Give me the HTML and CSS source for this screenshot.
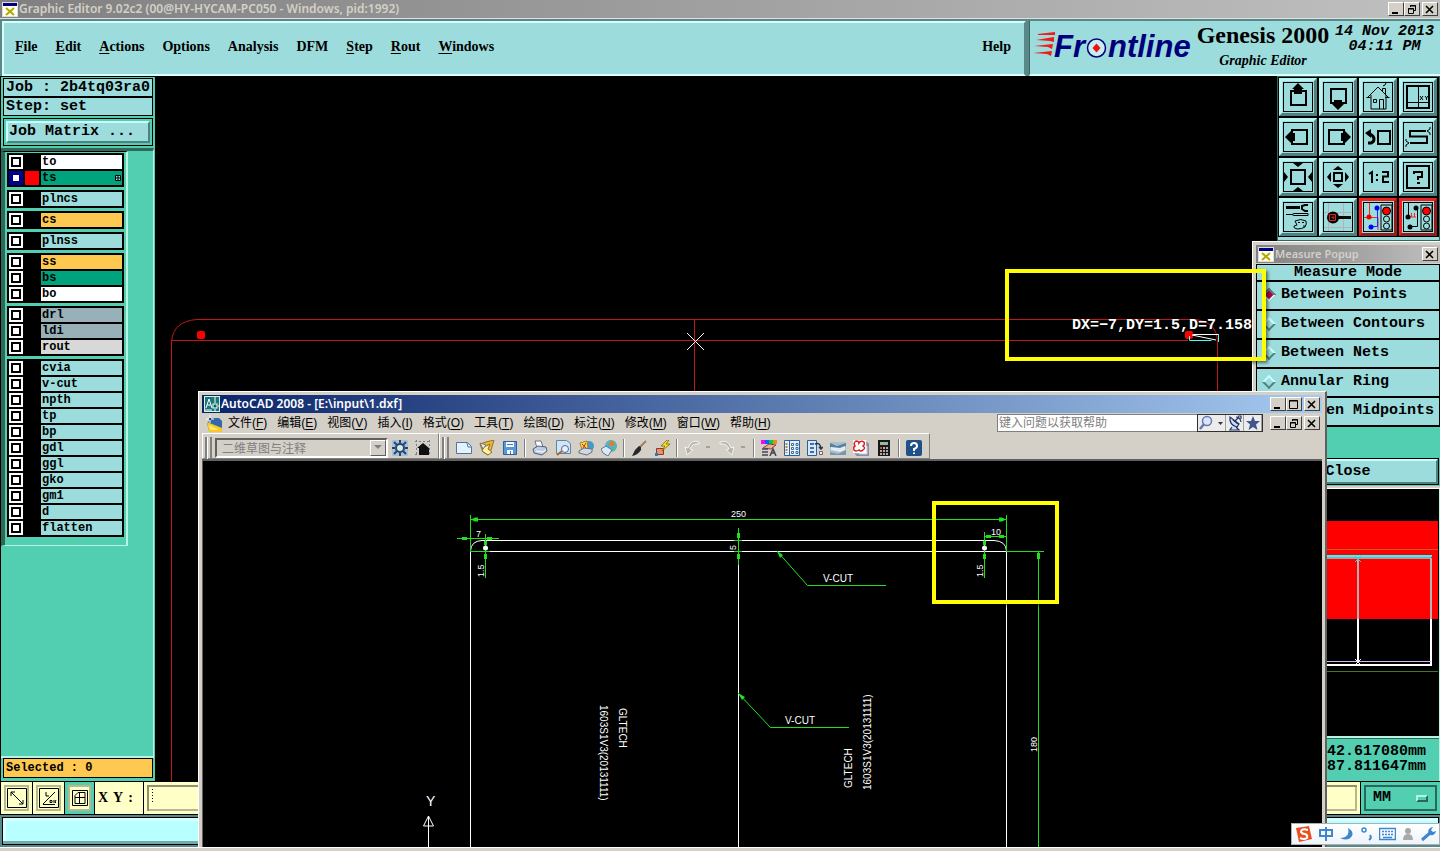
FILE: index.html
```html
<!DOCTYPE html>
<html lang="zh-CN">
<head>
<meta charset="utf-8">
<title>Graphic Editor 9.02c2</title>
<link rel="stylesheet" href="styles.css">
</head>
<body>
<div class="app">
  <header class="titlebar titlebar-idle">
    <svg class="app-icon" width="16" height="15" viewBox="0 0 16 15"><rect x="0" y="0" width="16" height="15" fill="#ddd"/><rect x="1" y="1" width="14" height="3" fill="#000080"/><rect x="1" y="4" width="14" height="10" fill="#fffff4"/><path d="M4 6l8 7M12 6l-8 7" stroke="#b5a800" stroke-width="2"/></svg>
    <h1 class="title">Graphic Editor 9.02c2 (00@HY-HYCAM-PC050 - Windows, pid:1992)</h1>
    <div class="win-buttons">
      <button class="wb" aria-label="Minimize"><svg width="12" height="11" viewBox="0 0 12 11"><path d="M2 9h6" stroke="#000" stroke-width="2"/></svg></button>
      <button class="wb" aria-label="Restore"><svg width="12" height="11" viewBox="0 0 12 11"><path d="M4.500 3V1.500h5v5H8M4 2h6M2.500 4.500h5v5h-5zM2 5h6" fill="none" stroke="#000"/></svg></button>
      <button class="wb wb-close" aria-label="Close"><svg width="12" height="11" viewBox="0 0 12 11"><path d="M2 2l7 7M9 2l-7 7" stroke="#000" stroke-width="1.600"/></svg></button>
    </div>
  </header>

  <div class="topbar">
    <nav class="menubar">
      <button><u>F</u>ile</button><button><u>E</u>dit</button><button><u>A</u>ctions</button><button>O<u>p</u>tions</button><button>Analysis</button><button>DFM</button><button><u>S</u>tep</button><button><u>R</u>out</button><button><u>W</u>indows</button>
      <button class="help">Help</button>
    </nav>
    <div class="brand">
      <svg class="logo" width="164" height="36" viewBox="0 0 164 36" role="img" aria-label="Frontline">
        <g fill="#f01c18"><path d="M5 5l17-2v3L5 6zM3 11l18-3v5l-4-1zM1 17l19-2-1 5-4-2zM0 24l19-2-1 5-4-2z"/></g>
        <text x="21" y="28" class="logo-text">Fr</text><text x="75" y="28" class="logo-text">ntline</text>
        <circle cx="63.500" cy="19" r="9" fill="#c8ecf0" stroke="#00007c" stroke-width="1.500"/><path d="M63.500 14.500l4 4.500-4 4.500-4-4.500z" fill="#f01010"/>
      </svg>
      <div class="product"><strong>Genesis 2000</strong><em>Graphic Editor</em></div>
      <div class="clock"><span>14 Nov 2013</span><span>04:11 PM</span></div>
    </div>
  </div>

  <main class="work">
    <aside class="side">
      <div class="job">Job : 2b4tq03ra0</div>
      <div class="job">Step: set</div>
      <div class="matrix"><button>Job Matrix ...</button></div>
      <div class="side-body">
        <div class="layers">
          <ul class="group">
            <li><input type="checkbox" aria-label="to"><i></i><span class="white">to</span></li>
            <li><input type="checkbox" aria-label="ts" checked><i class="red"></i><span class="green">ts<svg class="mark" width="6" height="6" viewBox="0 0 6 6"><path d="M.500.500h5v5h-5zM3 0v6M0 3h6" stroke="#000" fill="#9cdcdc"/></svg></span></li>
          </ul>
          <ul class="group"><li><input type="checkbox" aria-label="plncs"><i></i><span>plncs</span></li></ul>
          <ul class="group"><li><input type="checkbox" aria-label="cs"><i></i><span class="amber">cs</span></li></ul>
          <ul class="group"><li><input type="checkbox" aria-label="plnss"><i></i><span>plnss</span></li></ul>
          <ul class="group">
            <li><input type="checkbox" aria-label="ss"><i></i><span class="amber">ss</span></li>
            <li><input type="checkbox" aria-label="bs"><i></i><span class="green">bs</span></li>
            <li><input type="checkbox" aria-label="bo"><i></i><span class="white">bo</span></li>
          </ul>
          <ul class="group">
            <li><input type="checkbox" aria-label="drl"><i></i><span class="slate">drl</span></li>
            <li><input type="checkbox" aria-label="ldi"><i></i><span class="slate">ldi</span></li>
            <li><input type="checkbox" aria-label="rout"><i></i><span class="grey">rout</span></li>
          </ul>
          <ul class="group">
            <li><input type="checkbox" aria-label="cvia"><i></i><span>cvia</span></li>
            <li><input type="checkbox" aria-label="v-cut"><i></i><span>v-cut</span></li>
            <li><input type="checkbox" aria-label="npth"><i></i><span>npth</span></li>
            <li><input type="checkbox" aria-label="tp"><i></i><span>tp</span></li>
            <li><input type="checkbox" aria-label="bp"><i></i><span>bp</span></li>
            <li><input type="checkbox" aria-label="gdl"><i></i><span>gdl</span></li>
            <li><input type="checkbox" aria-label="ggl"><i></i><span>ggl</span></li>
            <li><input type="checkbox" aria-label="gko"><i></i><span>gko</span></li>
            <li><input type="checkbox" aria-label="gm1"><i></i><span>gm1</span></li>
            <li><input type="checkbox" aria-label="d"><i></i><span>d</span></li>
            <li><input type="checkbox" aria-label="flatten"><i></i><span>flatten</span></li>
          </ul>
        </div>
      </div>
      <div class="selected">Selected : 0</div>
    </aside>

    <svg class="canvas" aria-label="Board outline">
      <g transform="translate(-155 -77)" fill="none">
        <g stroke="#c01818"><path d="M171.500 781V342Q173 321 197 319.500H1194Q1217 321 1217.500 342V400M171.500 340.500H1188M694.500 319V400"/></g>
        <g fill="#f00"><rect x="197" y="331" width="8" height="8" rx="2"/><rect x="1185" y="331" width="8" height="8" rx="2"/></g>
        <path d="M687 333l17 17M704 333l-17 17" stroke="#fff"/>
        <path d="M1193 334.500h25.500v6M1192 335l24 5" stroke="#fff"/><path d="M1189.500 336v4.500h22M1218.500 335v7" stroke="#4ff"/>
        <text class="measure" x="1072" y="329">DX=−7,DY=1.5,D=7.158</text>
      </g>
    </svg>

    <aside class="right">
      <div class="tools">
        <button aria-label="Pan up"><svg viewBox="0 0 30 30"><rect x="8" y="9" width="15" height="14" class="s2"/><path d="M15 1l6 6h-2v5h-8V7H9z"/></svg></button>
        <button aria-label="Pan down"><svg viewBox="0 0 30 30"><rect x="8" y="7" width="15" height="14" class="s2"/><path d="M15 28l-6-6h2v-4h8v4h2z"/></svg></button>
        <button aria-label="Home"><svg viewBox="0 0 30 30"><path d="M5 15L15 5l10 10M8 13v14h15V13M3.500 15.500h4M22.500 15.500h4M10.500 17.500h3v3h-3zM16.500 27v-9.500h4V27M19.500 9V6.500h3V12M20 4l2-1 1-2" class="s1"/></svg></button>
        <button aria-label="Quadrants"><svg viewBox="0 0 30 30"><rect x="4" y="4" width="22" height="22" class="s2"/><path d="M15.500 4v22M4 20.500h22M17 14l3 4M20 14l-3 4M22 14l1.500 2L25 14M23.500 16v2" class="s1"/></svg></button>
        <button aria-label="Pan left"><svg viewBox="0 0 30 30"><rect x="9" y="8" width="15" height="14" class="s2"/><path d="M2 15l6-6v2h4v8H8v2z"/></svg></button>
        <button aria-label="Pan right"><svg viewBox="0 0 30 30"><rect x="6" y="8" width="15" height="14" class="s2"/><path d="M28 15l-6-6v2h-4v8h4v2z"/></svg></button>
        <button aria-label="Previous view"><svg viewBox="0 0 30 30"><rect x="15" y="9" width="12" height="13" class="s2"/><path d="M5 21h3q3-1 3-4t-4-5" class="s3"/><path d="M2 11l6-4v9z"/></svg></button>
        <button aria-label="Snake route"><svg viewBox="0 0 30 30"><path d="M23 9H7v5.500h17V21H7" class="s2"/><path d="M24 9l3-2v-2M24 9l3 2v2M6 21l-3-2v-2M6 21l-3 2v2" class="s1"/></svg></button>
        <button aria-label="Zoom out"><svg viewBox="0 0 30 30"><rect x="8" y="8" width="14" height="14" class="s2"/><path d="M10 1h10l-5 4zM10 29h10l-5-4zM1 10v10l4-5zM29 10v10l-4-5z"/></svg></button>
        <button aria-label="Zoom in"><svg viewBox="0 0 30 30"><rect x="11" y="11" width="8" height="8" class="s2"/><path d="M10 8h10l-5-4zM10 22h10l-5 4zM8 10v10l-4-5zM22 10v10l4-5z"/></svg></button>
        <button aria-label="Zoom one to two"><svg viewBox="0 0 30 30"><path d="M6 12l3-2v11M19 10h6v4.500h-5V20h6" class="s2"/><path d="M13 12h2v2h-2zM13 17h2v2h-2z"/></svg></button>
        <button aria-label="Help"><svg viewBox="0 0 30 30"><rect x="4" y="4" width="22" height="22" class="s2"/><path d="M11 12v-2h8v5h-4v3M14 21h3" class="s2"/></svg></button>
        <button aria-label="Setup tools"><svg viewBox="0 0 30 30"><path d="M3 5.500h14" class="s3"/><path d="M25 3h-3l-3 1v3l3 2h3" class="s2"/><path d="M3 12.500h6l2-1h14v2H11l-2-1M12 19q6-3 11 0 1 3-1 6-3 2-8 2-4-1-3-3l3-1q-1-2-2-4zM15 20.500h2M19 20.500h2M20 24h2" class="s1"/></svg></button>
        <button aria-label="Probe pad"><svg viewBox="0 0 30 30"><path d="M5.500 1v28M20.500 1v28M1 10.500h28M1 25.500h28" stroke="#b8b0b8"/><circle cx="10" cy="15.500" r="6"/><path d="M15 15.500h13" class="s3"/><path d="M6.500 12.500h6v6h-6zM9 15h2v1H9z" stroke="#e02020" fill="none"/></svg></button>
        <button class="hot" aria-label="Net check"><svg viewBox="0 0 30 30"><path d="M1 15.500h14V28M6.500 1v14" stroke="#f22" fill="none"/><path d="M14.500 5v19.500H9" stroke="#22f" fill="none"/><circle cx="6" cy="15" r="2.500" fill="#e00"/><g fill="#00f"><circle cx="14" cy="6" r="2.500"/><circle cx="8" cy="25" r="2.500"/></g><path d="M18 3h11v25H18z" class="s1"/><circle cx="23.500" cy="9" r="4" fill="#f00" stroke="#000"/><circle cx="23.500" cy="17" r="3" class="s1"/><circle cx="23.500" cy="24" r="3" class="s1"/></svg></button>
        <button class="hot" aria-label="Net compare"><svg viewBox="0 0 30 30"><path d="M5.500 1v14M14.500 5v19.500H9" class="s1"/><path d="M7 15h6M8.500 11v4M11.500 11v4" stroke="#f22" fill="none"/><circle cx="5" cy="15" r="2.500"/><circle cx="13" cy="6" r="2.500"/><circle cx="7" cy="25" r="2.500"/><path d="M18 3h11v25H18z" class="s1"/><circle cx="23.500" cy="9" r="4" fill="#f00" stroke="#000"/><circle cx="23.500" cy="17" r="3" class="s1"/><circle cx="23.500" cy="24" r="3" class="s1"/></svg></button>
      </div>
      <svg class="preview" aria-label="Overview">
        <g transform="translate(-1278 -488)" fill="none">
          <path fill="#f00" d="M1278 521h160v98h-160z"/>
          <path d="M1278 549.500h160" stroke="#d06010"/>
          <path d="M1278 558h153" stroke="#a8a0a8" stroke-width="2"/><path d="M1278 556h154" stroke="#2ff" stroke-width="2"/>
          <path d="M1358 558v61M1431 558v61" stroke="#b8b0b8" stroke-width="2"/>
          <path d="M1358 619v44M1431 619v46M1278 665h154" stroke="#fff" stroke-width="2"/><path d="M1278 661.500h153" stroke="#d8b8f0"/>
          <path d="M1355 556l6 6M1361 556l-6 6" stroke="#4cc"/><path d="M1355 659l6 6M1361 659l-6 6" stroke="#fff"/>
          <path d="M1278 671.500h160" stroke="#407828"/>
        </g>
      </svg>
      <div class="coords"><span>42.617080mm</span><span>87.811647mm</span></div>
    </aside>
  </main>

  <div class="entry">
    <button class="eb" aria-label="Free mode"><svg viewBox="0 0 20 20"><path d="M.500.500h19v19H.500zM4 4l12 12M4 8V4h4M12 16h4v-4"/></svg></button>
    <button class="eb" aria-label="Angle mode"><svg viewBox="0 0 20 20"><path d="M.500.500h19v19H.500zM4 16L16 4M4 16.500h12M7 4v4h3M11 12.500h2v2h-2zM15 12v3M17 12l-1 2 1 1"/></svg></button>
    <button class="eb on" aria-label="Grid mode"><svg viewBox="0 0 20 20"><path d="M2.500 2.500h15v15h-15zM5 7.500L8 4.500h7v11H5zM9.500 5v11M5 9.500h10"/></svg></button>
    <label for="xy">X Y :</label>
    <input id="xy" type="text">
    <div class="unit"><select aria-label="Units"><option>MM</option></select><i></i></div>
  </div>
  <div class="message"><output></output></div>
  <footer class="edge"></footer>

  <section class="popup">
    <div class="titlebar titlebar-idle">
      <svg class="app-icon" width="16" height="15" viewBox="0 0 16 15"><rect x="0" y="0" width="16" height="15" fill="#ddd"/><rect x="1" y="1" width="14" height="3" fill="#000080"/><rect x="1" y="4" width="14" height="10" fill="#fffff4"/><path d="M4 6l8 7M12 6l-8 7" stroke="#b5a800" stroke-width="2"/></svg>
      <h2 class="title">Measure Popup</h2>
      <div class="win-buttons"><button class="wb" aria-label="Close"><svg width="12" height="11" viewBox="0 0 12 11"><path d="M2 2l7 7M9 2l-7 7" stroke="#000" stroke-width="1.600"/></svg></button></div>
    </div>
    <div class="modes">
      <div class="mode-head">Measure Mode</div>
      <label><input type="radio" name="mode" checked>Between Points</label>
      <label><input type="radio" name="mode">Between Contours</label>
      <label><input type="radio" name="mode">Between Nets</label>
      <label><input type="radio" name="mode">Annular Ring</label>
      <label><input type="radio" name="mode">Between Midpoints</label>
    </div>
    <div class="popup-foot"><button>Close</button></div>
  </section>

  <section class="cad">
    <div class="titlebar titlebar-live">
      <svg class="app-icon" width="16" height="16" viewBox="0 0 16 16"><rect width="16" height="16" fill="#d8f0e8"/><rect x="1" y="1" width="14" height="14" fill="#187878"/><path d="M2 12L5 3l3 9M3 9h4M11 1v6M11 13v3M14 10h2M1 14h7" stroke="#fff" fill="none"/><rect x="9" y="8" width="4" height="4" fill="#066" stroke="#fff"/></svg>
      <h2 class="title">AutoCAD 2008 - [E:\input\1.dxf]</h2>
      <div class="win-buttons">
        <button class="wb" aria-label="Minimize"><svg width="12" height="11" viewBox="0 0 12 11"><path d="M2 9h6" stroke="#000" stroke-width="2"/></svg></button>
        <button class="wb" aria-label="Maximize"><svg width="12" height="11" viewBox="0 0 12 11"><path d="M1.500 1.500h8v8h-8zM1 2h9" fill="none" stroke="#000"/></svg></button>
        <button class="wb wb-close" aria-label="Close"><svg width="12" height="11" viewBox="0 0 12 11"><path d="M2 2l7 7M9 2l-7 7" stroke="#000" stroke-width="1.600"/></svg></button>
      </div>
    </div>
    <nav class="cad-menu">
      <svg width="16" height="17" viewBox="0 0 16 17"><path d="M1 8l5-5h7l3 3v10H3z" fill="#3468a8"/><path d="M1 7l15 6v4H3z" fill="#f8c828"/><path d="M3 10l10 5H4z" fill="#ffe878"/><path d="M4 0v8M0 4h8" stroke="#fff"/><rect x="3" y="3" width="2" height="2" fill="#248"/></svg>
      <button>文件(<u>F</u>)</button><button>编辑(<u>E</u>)</button><button>视图(<u>V</u>)</button><button>插入(<u>I</u>)</button><button>格式(<u>O</u>)</button><button>工具(<u>T</u>)</button><button>绘图(<u>D</u>)</button><button>标注(<u>N</u>)</button><button>修改(<u>M</u>)</button><button>窗口(<u>W</u>)</button><button>帮助(<u>H</u>)</button>
      <input class="ask" type="text" placeholder="键入问题以获取帮助" aria-label="键入问题以获取帮助">
      <div class="info">
        <button class="wide" aria-label="搜索"><svg width="28" height="16" viewBox="0 0 28 16"><circle cx="9" cy="6" r="4.500" fill="#d8e8ff" stroke="#6878b0" stroke-width="1.500"/><path d="M6 9l-4 5" stroke="#6878b0" stroke-width="2.500"/><path d="M20 7h5l-2.500 3z" fill="#333"/></svg></button>
        <button aria-label="通讯中心"><svg width="16" height="16" viewBox="0 0 16 16"><path d="M3 2q-1 8 7 10l2-3zM5 12l-2 3h9l-3-3" fill="#cfe0f4" stroke="#203468" stroke-width="1.200"/><path d="M6 5l5 4M8 6l4-4M11 1h3v3M9 2q4 0 5 5" stroke="#203468" fill="none" stroke-width="1.200"/></svg></button>
        <button aria-label="收藏夹"><svg width="16" height="16" viewBox="0 0 16 16"><path d="M8 1l2 5h5l-4 3.500 1.500 5.500L8 12l-4.500 3L5 9.500 1 6h5z" fill="#405888"/></svg></button>
      </div>
      <div class="win-buttons">
        <button class="wb" aria-label="Minimize drawing"><svg width="12" height="11" viewBox="0 0 12 11"><path d="M2 9h6" stroke="#000" stroke-width="2"/></svg></button>
        <button class="wb" aria-label="Restore drawing"><svg width="12" height="11" viewBox="0 0 12 11"><path d="M4.500 3V1.500h5v5H8M4 2h6M2.500 4.500h5v5h-5zM2 5h6" fill="none" stroke="#000"/></svg></button>
        <button class="wb wb-close" aria-label="Close drawing"><svg width="12" height="11" viewBox="0 0 12 11"><path d="M2 2l7 7M9 2l-7 7" stroke="#000" stroke-width="1.600"/></svg></button>
      </div>
    </nav>
    <div class="cad-tools">
      <div class="bar">
        <span class="grip"></span>
        <div class="workspace"><select disabled aria-label="工作空间"><option>二维草图与注释</option></select><i><svg width="9" height="5" viewBox="0 0 9 5"><path d="M0 0h8L4 4z" fill="#808080"/></svg></i></div>
        <button aria-label="工作空间设置"><svg viewBox="0 0 16 16"><path d="M0 0h16v16H0z" fill="#a8c0d8"/><circle cx="8" cy="8" r="4" fill="#dde8f4" stroke="#284868" stroke-width="2"/><path d="M8 0v3M8 13v3M0 8h3M13 8h3M2 2l3 3M11 11l3 3M14 2l-3 3M5 11l-3 3" stroke="#284868" stroke-width="2"/></svg></button>
        <button aria-label="我的工作空间"><svg viewBox="0 0 16 16"><path d="M0 1.500h16M1.500 0v16M0 14.500h16M14.500 0v16" stroke="#708090" stroke-dasharray="2 2"/><path d="M2 8l6-5 6 5v7H4V8z" fill="#101010"/></svg></button>
      </div>
      <div class="bar">
        <span class="grip"></span>
        <button aria-label="新建"><svg viewBox="0 0 16 16"><path d="M.500 2.500h11l4 4v7H.500z" fill="#e4f2fc" stroke="#4878a8"/><path d="M11 3l1 4h3" fill="none" stroke="#4878a8"/></svg></button>
        <button aria-label="打开"><svg viewBox="0 0 16 16"><path d="M1 4l6-2 8-2-3 10-3 5-5-3z" fill="#e8b838" stroke="#987018"/><path d="M5 7l6-3-2 5 4 3-4 3-6-4z" fill="#fff0a8" stroke="#907020"/><path d="M1 3l6 2-3 4z" fill="#eee" stroke="#777"/></svg></button>
        <button aria-label="保存"><svg viewBox="0 0 16 16"><path d="M1.500 1.500h13v13h-13z" fill="#5898d8" stroke="#2860a0"/><path d="M4 2h8v5H4zM5 10h6v4H5z" fill="#f4f8ff"/><path d="M5 4.500h6M8.500 11v3" stroke="#4878b0"/></svg></button>
        <span class="sep"></span>
        <button aria-label="打印"><svg viewBox="0 0 16 16"><path d="M3 1h6l2 6-6 1z" fill="#fff" stroke="#678"/><path d="M1 9l5-3 8 1 1 4-5 4-8-2z" fill="#c0cce0" stroke="#506080"/><path d="M4 11l7 1 3-2" stroke="#fff" fill="none"/></svg></button>
        <button aria-label="打印预览"><svg viewBox="0 0 16 16"><path d="M1.500.500h10l4 3v10h-14z" fill="#d0e4f4" stroke="#5888a8"/><circle cx="10" cy="9" r="3.500" fill="#eef" stroke="#506898"/><path d="M7 11l-5 4" stroke="#a86820" stroke-width="2"/></svg></button>
        <button aria-label="发布"><svg viewBox="0 0 16 16"><circle cx="11" cy="6" r="5" fill="#4898c8"/><path d="M2 3l7-2 1 7-6 2z" fill="#f8d850" stroke="#a88420"/><path d="M1 11l5-3 8 1v3l-5 3-8-2z" fill="#d0d8e4" stroke="#607088"/><path d="M4 4l4 4M8 3L5 8" stroke="#b33"/></svg></button>
        <button aria-label="三维发布"><svg viewBox="0 0 16 16"><circle cx="10" cy="6" r="6" fill="#50b8a0"/><path d="M10 0q4 2 4 8H8q0-6 2-8z" fill="#e87838"/><path d="M9 1q-4 2-3 7l9-2" stroke="#48b8d8" fill="none" stroke-width="2"/><path d="M0 9l5-3 6 4-4 6-5-3z" fill="#dce8f4" stroke="#5878a0"/></svg></button>
        <span class="sep"></span>
        <button aria-label="特性匹配"><svg viewBox="0 0 16 16"><path d="M15 1L8 8" stroke="#a08060" stroke-width="2"/><path d="M10 7l-2-1-4 4-3 6q6-1 9-6z" fill="#282828"/></svg></button>
        <button aria-label="块编辑器"><svg viewBox="0 0 16 16"><path d="M2.500 8.500h7v6h-7z" fill="#e89070" stroke="#8c3820"/><path d="M13 0L7 6h4l-3 5 8-7h-4l3-4z" fill="#f8e020" stroke="#806808" stroke-width=".800"/><path d="M1 13h3v3H1z" fill="#2878d8"/></svg></button>
        <span class="sep"></span>
        <button aria-label="放弃"><svg viewBox="0 0 16 16"><path d="M15 2Q7-1 4 8L1 7l2 8 6-5-3-1q2-6 9-5z" fill="#b4b4b0" stroke="#f4f4f0"/></svg></button><span class="drop"></span>
        <button aria-label="重做"><svg viewBox="0 0 16 16"><path d="M1 2q8-3 11 6l3-1-2 8-6-5 3-1Q8 3 1 4z" fill="#b4b4b0" stroke="#f4f4f0"/></svg></button><span class="drop"></span>
        <span class="sep"></span>
        <button aria-label="特性"><svg viewBox="0 0 16 16"><path d="M0 0h4v4H0z" fill="#f0f"/><path d="M4 0h4v4H4z" fill="#06f"/><path d="M8 0h4v4H8z" fill="#0c4"/><path d="M12 0h4v4h-4z" fill="#e82"/><path d="M2 8l6-4 7 1-5 4z" fill="#e8b090" stroke="#844"/><path d="M1 9h6M1 12h6M1 15h6M9 16l3-7 3 7M10 13h4" stroke="#445" fill="none" stroke-width="1.500"/></svg></button>
        <button aria-label="设计中心"><svg viewBox="0 0 16 16"><path d="M.500.500h15v15H.500z" fill="#e4f0fc" stroke="#2860a0"/><path d="M5.500 1v14" stroke="#2860a0"/><path d="M2.500 3v10" stroke="#c88820" stroke-width="2" stroke-dasharray="2 1"/><path d="M7.500 3.500h2v2h-2zM12 3.500h2v2h-2zM7.500 7.500h2v2h-2zM12 7.500h2v2h-2zM7.500 11.500h2v2h-2zM12 11.500h2v2h-2z" fill="#fff" stroke="#406890"/></svg></button>
        <button aria-label="工具选项板"><svg viewBox="0 0 16 16"><path d="M.500.500h9v15h-9z" fill="#d8e8f8" stroke="#2860a0"/><path d="M3 3h4v2H3zM3 7h4v2H3zM3 11h4v2H3z" fill="#4070a8"/><path d="M8 4q5-2 6 4M12 7l2 2 2-2" fill="none" stroke="#234" stroke-width="1.500"/><path d="M12.500 11.500h3v3h-3z" fill="#fed" stroke="#666"/></svg></button>
        <button aria-label="图纸集管理器"><svg viewBox="0 0 16 16"><path d="M0 2h16v13H0z" fill="#a8c0d0"/><path d="M0 3l7 3 9-3v3l-7 3-9-2z" fill="#5880a0"/><path d="M1 7l9 1 5-2v4l-5 2-9-2z" fill="#e4ecf0"/><path d="M0 12l8 2 8-4v5H0z" fill="#7898b0"/></svg></button>
        <button aria-label="标记集管理器"><svg viewBox="0 0 16 16"><path d="M3 3h12v12H3zM5 5h11v11H5z" fill="#dce4f0" stroke="#687890"/><path d="M0 0h13v13H0z" fill="#fff"/><path d="M3 1q3 0 3 2 2-3 5-1 1 3-1 4 3 2 0 4-2 2-4 0-3 2-5 0-1-3 1-4-2-3 1-5z" fill="none" stroke="#e02020" stroke-width="1.500"/></svg></button>
        <button aria-label="计算器"><svg viewBox="0 0 16 16"><path d="M2 0h12v16H2z" fill="#181818"/><path d="M4 2h8v3H4z" fill="#98b898"/><path d="M4 8h8M4 11h8M4 14h8" stroke="#ddd" stroke-width="1.500" stroke-dasharray="2 1"/><path d="M4 7h2v2H4z" fill="#e33"/></svg></button>
        <span class="sep"></span>
        <button aria-label="帮助"><svg viewBox="0 0 16 16"><rect width="16" height="16" rx="2" fill="#205088"/><path d="M5 6q0-3 3-3t3 3q0 2-3 3v2M8 12.500V14" fill="none" stroke="#fff" stroke-width="2"/></svg></button>
      </div>
    </div>
    <svg class="drawing" aria-label="1.dxf">
      <g transform="translate(-203 -461)" fill="none">
        <g stroke="#fff">
          <path d="M470.500 850V551Q471 541 482 540.500H994Q1006 541 1006.500 551V850M470 551.500H1006M738.500 540V850"/>
          <path d="M428.500 850V816l-5 10h10l-5-10"/>
        </g>
        <g stroke="#20e020">
          <path d="M470.500 515V552M1006.500 515V552M470 519.500H1006M457 538.500H499M485.500 534V578M738.500 528V565M470 551.500H490M734 551.500h8M984.500 532V578M984 536.500H1006M1006 551.500H1044M1038.500 551V850M734 540.500h8"/>
          <path d="M777 551L807.500 585.500H886M738 693L770.500 727.500H849"/>
        </g>
        <path fill="#20e020" d="M471 519.500l4-2h3v4h-3zM1006 519.500l-4-2h-3v4h3zM462 537h5v3h-5zM487 537h5v3h-5zM484 541h3v4h-3zM484 554h3v5h-3zM737 533h3v5h-3zM737 554h3v5h-3zM983 541h3v4h-3zM983 554h3v5h-3zM986 535h5v3h-5zM999 535h5v3h-5zM1037 553h3v6h-3zM777 551l6 4-3 3zM738 693l7 4-3 3z"/>
        <g fill="#fff"><circle cx="485.500" cy="548" r="2.500"/><circle cx="984.500" cy="548" r="2.500"/></g>
        <g class="dim">
          <text x="731" y="517">250</text><text x="476" y="537">7</text><text x="991" y="535">10</text>
          <text transform="translate(736 550) rotate(-90)">5</text>
          <text transform="translate(484 577) rotate(-90)">1.5</text>
          <text transform="translate(983 577) rotate(-90)">1.5</text>
          <text transform="translate(1037 752) rotate(-90)">180</text>
        </g>
        <g class="note">
          <text x="823" y="582">V-CUT</text><text x="785" y="724">V-CUT</text>
          <text transform="translate(600 705) rotate(90)">1603S1V3(20131111)</text>
          <text transform="translate(619 708) rotate(90)">GLTECH</text>
          <text transform="translate(852 788) rotate(-90)">GLTECH</text>
          <text transform="translate(871 790) rotate(-90)">1603S1V3(20131111)</text>
        </g>
        <text class="axis" x="426" y="806">Y</text>
      </g>
    </svg>
  </section>

  <div class="callout callout-a"></div>
  <div class="callout callout-b"></div>

  <div class="ime">
    <svg width="18" height="18" viewBox="0 0 18 18"><path d="M1 3l13-2 3 13-13 3z" fill="#e85020"/><path d="M13 5Q6 3 6 7q1 2 4 2 3 1 2 4-3 2-7 0" fill="none" stroke="#fff" stroke-width="2"/></svg>
    <svg width="16" height="16" viewBox="0 0 16 16" fill="none" stroke="#3c88d0" stroke-width="2"><path d="M2 4h12v6H2zM8 1v14"/></svg>
    <svg width="16" height="16" viewBox="0 0 16 16"><path d="M9 2q6 3 4 8-4 6-12 2 6 0 8-4 1-3 0-6z" fill="#3c88d0"/></svg>
    <svg width="14" height="16" viewBox="0 0 14 16" fill="none" stroke="#3c88d0"><circle cx="4" cy="4" r="2" stroke-width="1.500"/><path d="M10 9q2 3-1 5" stroke-width="2"/></svg>
    <svg width="17" height="14" viewBox="0 0 17 14" fill="none" stroke="#3c88d0"><rect x=".500" y="1.500" width="16" height="11" stroke-width="1.500"/><path d="M3 4.500h12M3 7.500h12" stroke-dasharray="2 1" stroke-width="1.500"/><path d="M4 10.500h9" stroke-width="1.500"/></svg>
    <svg width="14" height="16" viewBox="0 0 14 16" fill="#a8a8a8"><circle cx="7" cy="5" r="3"/><path d="M2 14q0-6 5-6t5 6z"/></svg>
    <svg width="16" height="16" viewBox="0 0 16 16"><path d="M2 14l8-7" stroke="#3c88d0" stroke-width="3"/><path d="M13 1l-2 3 2 2 3-1q-1 5-6 4-3-3-1-6 2-2 4-2z" fill="#3c88d0"/></svg>
  </div>
</div>
</body>
</html>
```

FILE: styles.css
```css
:root {
  --aqua: #9cdcdc;
  --teal: #52cfb0;
  --deep: #306858;
  --cream: #ffffc8;
  --chrome: #d4d0c8;
  --mono: "Liberation Mono", monospace;
  --ui: "Noto Sans", "Noto Sans CJK SC", sans-serif;
}
* { box-sizing: border-box; }
body { margin: 0; background: #000; font: bold 15px/18px var(--mono); color: #000; }
button, input, select { font: inherit; color: inherit; margin: 0; padding: 0; border: 0; border-radius: 0; background: none; }
ul, h1, h2 { margin: 0; padding: 0; list-style: none; }
svg { display: block; flex: none; }
u { text-underline-offset: 2px; }

.app { position: relative; min-height: 100vh; display: flex; flex-direction: column; overflow: hidden; }

/* window chrome */
.titlebar { display: flex; align-items: center; height: 18px; padding: 0 2px; gap: 1px; }
.titlebar-idle { background: linear-gradient(90deg, #808080, #c0c0c0); color: var(--chrome); }
.titlebar-live { background: linear-gradient(90deg, #0a246a, #a6caf0); color: #fff; }
.title { flex: 1; font: 600 12px/18px var(--ui); white-space: nowrap; }
.popup .title { font-size: 11px; }
.win-buttons { display: flex; }
.wb { display: flex; align-items: center; justify-content: center; width: 16px; height: 14px; background: var(--chrome); border: 1px solid; border-color: #fff #404040 #404040 #fff; }
.wb-close { margin-left: 2px; }

.topbar { display: flex; height: 58px; border-top: 1px solid #e0e0e0; background: #588888; padding-top: 2px; gap: 3px; }
.menubar { flex: 1; display: flex; align-items: center; gap: 18px; margin-left: 2px; padding: 0 13px 4px 11px; background: var(--aqua); border: 2px solid; border-color: #d8fffc #588888 #d8fffc #d8fffc; font: bold 14px/18px "Liberation Serif", serif; }
.menubar .help { margin-left: auto; }
.brand { display: flex; width: 411px; background: var(--aqua); border-left: 1px solid #3c6464; border-bottom: 2px solid #d8fffc; padding-left: 3px; }
.logo { margin-top: 8px; overflow: visible; }
.logo-text { font: italic bold 31px "Liberation Sans", sans-serif; fill: #00007c; }
.product { display: flex; flex-direction: column; align-items: center; width: 132px; font-family: "Liberation Serif", serif; white-space: nowrap; }
.product strong { font-size: 24px; line-height: 28px; }
.product em { font-size: 14px; line-height: 24px; }
.clock { flex: 1; display: flex; flex-direction: column; align-items: center; font-style: italic; line-height: 15px; padding-top: 3px; white-space: nowrap; }

/* main work area */
.work { flex: 1; display: flex; border-top: 1px solid #000; }
.side { width: 155px; display: flex; flex-direction: column; background: var(--teal); border-left: 1px solid #000; border-right: 1px solid var(--teal); }
.job { margin: 1px 1px 0 2px; border: 1px solid #000; background: var(--aqua); height: 19px; line-height: 17px; padding-left: 2px; white-space: pre; }
.job + .job { margin-top: 0; }
.matrix { margin: 2px 1px 0 2px; border: 1px solid #000; padding: 2px; }
.matrix button { width: 100%; height: 22px; text-align: left; padding-left: 1px; background: var(--aqua); border: 2px solid; border-color: #c8fffc #508080 #508080 #c8fffc; }
.side-body { flex: 1; margin-top: 2px; border-top: 3px solid var(--deep); border-right: 1px solid #b8f4e4; border-bottom: 2px solid #b8f4e4; }
.layers { width: 127px; padding: 1px 2px 8px 2px; border: 1px solid #000; border-left: 4px solid var(--deep); border-right: 2px solid #b8f4e4; border-bottom-color: #b8f4e4; display: grid; gap: 3px; }
.group { display: grid; gap: 2px; padding: 2px; background: #000; }
.group li { display: grid; grid-template-columns: 14px 14px 1fr; gap: 2px; height: 14px; font-size: 12px; line-height: 14px; }
.group input { appearance: none; width: 14px; height: 14px; background: #fff; border: 2px solid #fff; outline: 2px solid #000; outline-offset: -4px; }
.group input:checked { background: #fff; border: 3px solid #000098; outline: 1px solid #000060; outline-offset: -4px; }
.group span { position: relative; background: var(--aqua); padding-left: 1px; }
.group .white { background: #fff; }
.group .green { background: #00a47c; }
.group .amber { background: #ffc850; }
.group .slate { background: #98b0b8; }
.group .grey { background: #d8d8d8; }
.red { background: #f00; }
.mark { position: absolute; right: 1px; top: 4px; }
.selected { margin: 0 1px 3px 2px; height: 20px; border: 1px solid #000; background: #ffc850; font-size: 12px; line-height: 18px; padding-left: 2px; }

.canvas { flex: 1 1 0; width: 0; height: auto; background: #000; }
.measure { font: bold 15px var(--mono); fill: #fff; }

.right { width: 162px; display: flex; flex-direction: column; border-right: 1px solid #b8f4e4; }
.tools { display: grid; grid-template-columns: repeat(4, 38px); gap: 2px; padding: 1px 0 1px 1px; background: #000; border-bottom: 3px solid var(--aqua); outline: 1px solid var(--deep); }
.tools button { height: 38px; background: var(--aqua); border: 3px solid; border-color: #b8f4f4 #508080 #508080 #b8f4f4; padding: 1px; }
.tools svg { width: 30px; height: 30px; outline: 1px solid #000; outline-offset: -1px; }
.tools .hot { border-color: #f02020 #902020 #902020 #f02020; }
.s1, .s2, .s3 { fill: none; stroke: #000; }
.s2 { stroke-width: 2; }
.s3 { stroke-width: 3; }
.preview { width: 160px; height: 248px; margin-top: auto; background: #000; }
.coords { display: flex; flex-direction: column; align-items: flex-end; background: var(--teal); border-top: 2px solid #b8f4e4; box-shadow: inset 0 1px var(--deep); padding: 6px 13px 7px 0; line-height: 15px; }

/* coordinate entry */
.entry { display: flex; height: 34px; background: #000; padding: 1px 0 1px 1px; gap: 1px; }
.eb { width: 31px; background: var(--cream); border: 4px solid var(--cream); outline: 2px solid #b8b890; outline-offset: -5px; display: flex; align-items: center; justify-content: center; }
.eb svg { width: 20px; height: 20px; fill: none; stroke: #000; }
.eb.on { border-color: var(--teal); width: 29px; }
.entry label { width: 48px; background: var(--cream); font: bold 14px/32px "Liberation Serif", serif; padding-left: 3px; white-space: pre; word-spacing: 2px; }
/* the inner gradient is the dotted text caret */
.entry input { flex: 1; background: repeating-linear-gradient(#000 0 1px, var(--cream) 1px 3px) 5px 4px / 1px 15px no-repeat var(--cream); border: 3px solid var(--cream); outline: 0; box-shadow: inset 2px 2px #909070, inset -2px -2px #b8b890; padding-left: 8px; }
.unit { display: flex; align-items: center; width: 79px; background: var(--teal); border: 3px solid var(--teal); outline: 2px solid #286858; outline-offset: -5px; padding: 0 9px; }
.unit select { appearance: none; flex: 1; font-size: 15px; }
.unit i { width: 12px; height: 7px; border: 2px solid; border-color: #b8f4e4 #286858 #286858 #b8f4e4; }

.message { height: 32px; background: #588888; padding: 2px 1px 2px 2px; }
.message output { display: block; height: 28px; border: 1px solid #000; background: #b8ffff; box-shadow: inset 0 -3px #78a8a8, inset 3px 3px #d8ffff; }
.edge { height: 4px; background: var(--chrome); border-top: 1px solid #fff; }

/* measure popup */
.popup { position: absolute; right: 0; top: 241px; width: 188px; background: var(--chrome); border: 1px solid #fff; border-right: 0; padding: 3px 0 2px 3px; }
.modes { background: #000; display: grid; gap: 2px; padding: 1px 1px 2px 1px; margin-top: 1px; }
.mode-head { background: var(--aqua); text-align: center; height: 15px; line-height: 15px; }
.modes label { display: flex; align-items: center; gap: 7px; height: 27px; background: var(--aqua); padding: 0 0 2px 7px; white-space: nowrap; }
.modes input { appearance: none; width: 10px; height: 10px; border: 2px solid; border-color: #c8fffc #508080 #508080 #c8fffc; transform: rotate(45deg); }
.modes input:checked { background: #b00040; border-color: #508080 #c8fffc #c8fffc #508080; }
.popup-foot { background: var(--teal); padding: 32px 2px 2px 2px; }
.popup-foot button { width: 100%; height: 25px; background: var(--aqua); border: 2px solid; border-color: #c8fffc #508080 #508080 #c8fffc; outline: 1px solid #000; }

/* AutoCAD window */
.cad { position: absolute; left: 198px; right: 113px; top: 391px; bottom: 4px; display: flex; flex-direction: column; background: var(--chrome); border: 1px solid #fff; border-right: 2px solid #606060; border-bottom: 0; padding: 3px 3px 0 3px; }
.cad-menu { display: flex; align-items: center; height: 20px; padding: 0 2px 0 4px; font: 12px/18px "Liberation Sans", "Noto Sans CJK SC", sans-serif; }
.cad-menu > svg { margin-right: 1px; }
.cad-menu > button { padding: 0 5px; white-space: nowrap; }
.ask { width: 200px; height: 18px; margin-left: auto; background: #fff; border: 1px solid #808080; border-right: 0; padding-left: 1px; }
.ask::placeholder { color: #808080; opacity: 1; }
.info { display: flex; border: 1px solid #303030; height: 18px; margin-right: 7px; }
.info button { width: 18px; background: #ececec; border-right: 1px solid #a0a0a0; }
.info .wide { width: 28px; }
.info svg { margin: auto; }
.cad-tools { display: flex; height: 28px; border-bottom: 2px solid #606060; }
.bar { display: flex; align-items: center; border: 1px solid; border-color: #fff #808080 #808080 #fff; padding: 3px 4px 0 0; }
.grip { width: 7px; height: 22px; margin: 0 3px 0 2px; border-left: 2px solid #808080; border-right: 2px solid #808080; box-shadow: inset 1px 0 #fff; }
.bar button { width: 23px; height: 20px; display: flex; align-items: center; justify-content: center; }
.bar button svg { width: 16px; height: 16px; }
.workspace { display: flex; width: 173px; height: 20px; border: 2px solid; border-color: #606060 #fff #fff #606060; }
.workspace select { appearance: none; flex: 1; padding-left: 5px; font: 12px/16px "Noto Sans CJK SC", sans-serif; color: #808080; opacity: 1; }
.workspace i { width: 16px; display: flex; align-items: center; justify-content: center; border: 1px solid; border-color: #fff #606060 #606060 #fff; }
.sep { width: 2px; height: 18px; margin: 0 2px 0 3px; border-left: 1px solid #808080; border-right: 1px solid #fff; }
.drop { width: 12px; height: 3px; background: linear-gradient(#a0a0a0, #a0a0a0) 3px 0 / 4px 2px no-repeat; }
.drawing { flex: 1; width: 100%; height: 0; background: #000; border-left: 1px solid #606060; }
.dim, .note, .axis { fill: #fff; font-family: "Liberation Sans", sans-serif; font-weight: normal; }
.dim { font-size: 9px; }
.note { font-size: 10px; }
.axis { font-size: 14px; }

/* highlights drawn over the windows */
.callout { position: absolute; border: 4px solid #ff0; box-shadow: 2px 2px 3px rgba(0, 0, 0, .5); }
.callout-a { left: 1005px; top: 269px; width: 261px; height: 92px; }
.callout-b { left: 932px; top: 501px; width: 127px; height: 103px; }

.ime { position: absolute; right: 0; bottom: 6px; width: 149px; height: 22px; display: flex; align-items: center; justify-content: space-around; background: linear-gradient(#fff, #eef4fa); border: 1px solid #a8b0b8; }
```
